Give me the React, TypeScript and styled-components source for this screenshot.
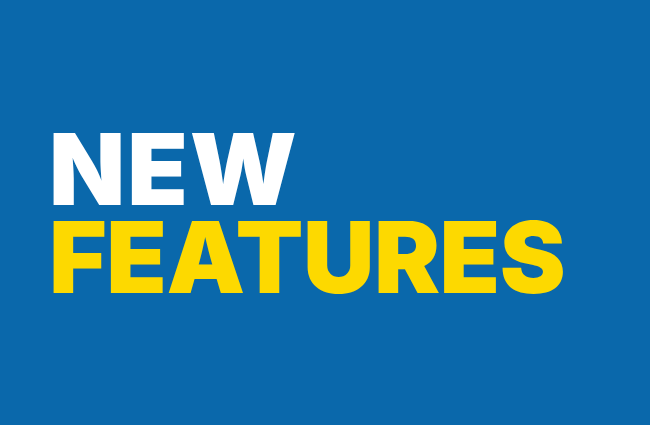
import styled, { createGlobalStyle } from 'styled-components';

const GlobalStyle = createGlobalStyle`
	html, body {
		margin: 0;
		padding: 0;
		background: #0a68ab;
	}
`;

export default function App(): JSX.Element {
	return (
		<>
			<GlobalStyle />
			<Banner>
				<Headline>
					<Line $color="#ffffff" $spacing={2}>NEW</Line>
					<Line $color="#fdd900" $spacing={-0.5}>FEATURES</Line>
				</Headline>
			</Banner>
		</>
	);
}

const Banner = styled.div`
	width: 650px;
	height: 425px;
	background: #0a68ab;
	display: flex;
	align-items: center;
	padding-left: 49px;
	box-sizing: border-box;
	overflow: hidden;
`;

const Headline = styled.h1`
	margin: 0;
	display: flex;
	flex-direction: column;
	font-family: Inter, Roboto, sans-serif;
	font-weight: 900;
	font-size: 99px;
	line-height: 88px;
`;

const Line = styled.span<{ $color: string; $spacing: number }>`
	display: block;
	color: ${(p) => p.$color};
	letter-spacing: ${(p) => p.$spacing}px;
`;
